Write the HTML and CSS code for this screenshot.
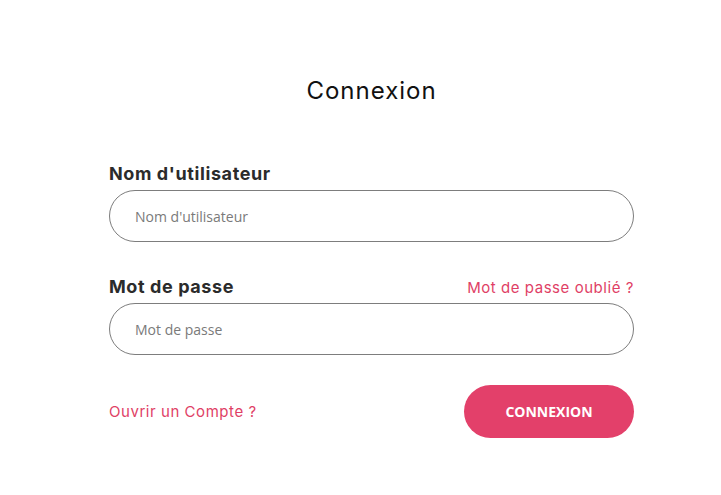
FILE: index.html
```html
<!DOCTYPE html>
<html lang="fr">
<head>
<meta charset="utf-8">
<title>Connexion</title>
<link rel="stylesheet" href="styles.css">
</head>
<body>
<main class="login">
  <h1 class="login-title">Connexion</h1>
  <form class="login-form">
    <div class="field">
      <div class="field-head">
        <label class="field-label" for="user">Nom d'utilisateur</label>
      </div>
      <input class="field-input" id="user" type="text" placeholder="Nom d'utilisateur">
    </div>
    <div class="field">
      <div class="field-head">
        <label class="field-label" for="pass">Mot de passe</label>
        <a class="link" href="#">Mot de passe oublié ?</a>
      </div>
      <input class="field-input" id="pass" type="password" placeholder="Mot de passe">
    </div>
    <div class="form-foot">
      <a class="link" href="#">Ouvrir un Compte ?</a>
      <button class="submit" type="button">CONNEXION</button>
    </div>
  </form>
</main>
</body>
</html>
```

FILE: styles.css
```css
html, body {
  margin: 0;
  padding: 0;
  background: #ffffff;
}
body {
  font-family: "Inter", "Noto Sans", sans-serif;
  color: #222;
}
.login {
  width: 525px;
  margin-left: 109px;
  padding-top: 75px;
}
.login-title {
  margin: 0;
  text-align: center;
  font-size: 24px;
  font-weight: 400;
  line-height: 32px;
  letter-spacing: 1px;
  color: #111;
}
.login-form {
  margin-top: 56px;
  display: flex;
  flex-direction: column;
}
.field {
  display: flex;
  flex-direction: column;
}
.field + .field {
  margin-top: 34px;
}
.field-head {
  display: flex;
  justify-content: space-between;
  align-items: baseline;
  height: 22px;
  margin-bottom: 5px;
}
.field-label {
  font-size: 18px;
  font-weight: 700;
  letter-spacing: 0.6px;
  color: #2b2b2b;
}
.link {
  font-size: 15px;
  letter-spacing: 0.55px;
  color: #df3f66;
  text-decoration: none;
}
.field-input {
  box-sizing: border-box;
  height: 52px;
  width: 100%;
  border: 1px solid #7d7d7d;
  border-radius: 26px;
  padding: 0 25px;
  font-family: "Open Sans", sans-serif;
  font-size: 14px;
  color: #333;
  outline: none;
}
.field-input::placeholder {
  color: #7a7a7a;
}
.form-foot {
  display: flex;
  justify-content: space-between;
  align-items: center;
  margin-top: 30px;
}
.submit {
  width: 170px;
  height: 53px;
  border: none;
  border-radius: 27px;
  background: #e3406a;
  color: #fff;
  font-family: "Open Sans", sans-serif;
  font-weight: 700;
  font-size: 14px;
  cursor: pointer;
}
```
